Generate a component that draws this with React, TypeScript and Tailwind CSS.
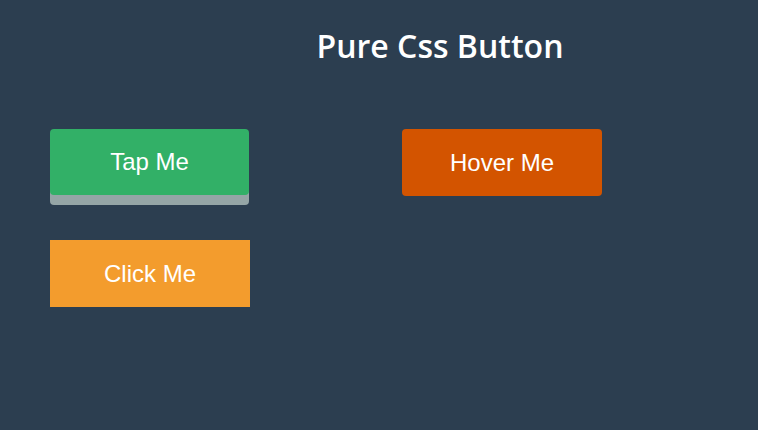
export default function App() {
  return (
    <div className="h-[430px] w-full overflow-hidden bg-[#2c3e50]">
      <div className="pl-[122px] pt-[24px] text-center">
        <h1 className="text-[32px] font-semibold leading-[44px] text-white" style={{ fontFamily: '"Open Sans", sans-serif' }}>
          Pure Css Button
        </h1>
      </div>
      <div className="ml-[50px] mt-[61px] grid grid-cols-[352px_200px] gap-y-[44px]" style={{ fontFamily: '"Liberation Sans", Arial, sans-serif' }}>
        <button className="flex h-[66px] w-[199px] items-center justify-center rounded-[4px] bg-[#32b067] text-[24px] text-white shadow-[0_10px_0_0_#95a5a6]">
          Tap Me
        </button>
        <button className="flex h-[67px] w-[200px] items-center justify-center rounded-[4px] bg-[#d35400] text-[24px] text-white">
          Hover Me
        </button>
        <button className="flex h-[67px] w-[200px] items-center justify-center bg-[#f39c2d] text-[24px] text-white">
          Click Me
        </button>
      </div>
    </div>
  );
}
